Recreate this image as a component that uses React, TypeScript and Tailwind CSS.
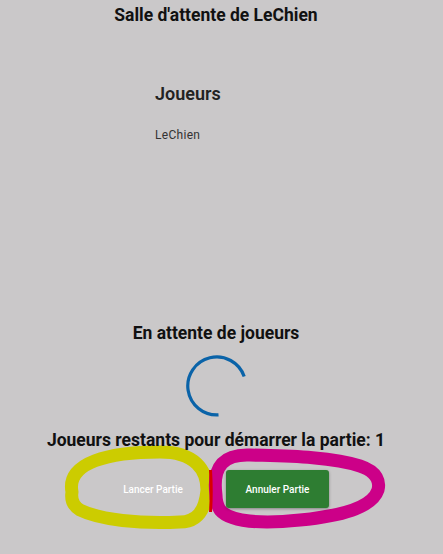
import React from 'react';

const Spinner = () => (
  <svg width="64" height="64" viewBox="0 0 64 64" className="block">
    {/* arc from right-up around the left to the bottom */}
    <path
      d="M 60.2 22.5 A 29 29 0 1 0 34.5 60.9"
      fill="none"
      stroke="#0a63a8"
      strokeWidth="3.2"
    />
  </svg>
);

// hand-drawn marks over the buttons
const Marks = () => (
  <svg
    width="443"
    height="554"
    viewBox="0 0 443 554"
    className="absolute left-0 top-0 pointer-events-none"
  >
    <path
      d="M 72 492 C 66 462 110 452 160 452 C 195 452 207 470 207 490 C 205 512 196 522 180 522 C 140 524 100 520 80 510 C 72 505 71 498 72 492 Z"
      fill="none"
      stroke="#cccc00"
      strokeWidth="13"
      strokeLinejoin="round"
    />
    <path
      d="M 216 495 C 212 465 225 454 250 455 C 280 456 330 456 360 466 C 378 472 380 482 378 490 C 372 508 340 516 300 520 C 262 524 230 522 220 510 C 217 505 216 500 216 495 Z"
      fill="none"
      stroke="#cc0088"
      strokeWidth="13"
      strokeLinejoin="round"
    />
    <path d="M 210.5 470 C 211.5 485 211.5 498 210.5 512" fill="none" stroke="#d80000" strokeWidth="3" />
  </svg>
);

export default function App() {
  return (
    <div
      className="relative w-[443px] h-[554px] overflow-hidden bg-[#cac8c9]"
      style={{ fontFamily: 'Roboto, "Noto Sans", sans-serif' }}
    >
      <Marks />
      <div className="relative w-[432px] flex flex-col items-center">
        <h1 className="mt-[4px] text-[17.5px] leading-[22px] font-bold text-[#111]">
          Salle d'attente de LeChien
        </h1>

        {/* Liste des joueurs */}
        <div className="mt-[57px] w-[122px]">
          <h2 className="text-[18px] leading-[22px] font-semibold text-[#222]">Joueurs</h2>
          <p className="mt-[22px] text-[12px] leading-[16px] tracking-[0.3px] text-[#333]">LeChien</p>
        </div>

        <h3 className="mt-[179px] text-[17.5px] leading-[22px] font-bold text-[#111]">
          En attente de joueurs
        </h3>

        <div className="mt-[10px]">
          <Spinner />
        </div>

        <p className="mt-[11px] text-[17.5px] leading-[22px] font-bold text-[#111]">
          Joueurs restants pour démarrer la partie: 1
        </p>

        <div className="mt-[19px] mr-[7px] flex items-center gap-[16px]">
          <button className="w-[114px] h-[38px] rounded-[3px] text-[10px] font-medium text-white">
            Lancer Partie
          </button>
          <button className="w-[103px] h-[38px] rounded-[3px] bg-[#2e7d32] text-[10px] font-medium text-white shadow-[0_1px_3px_rgba(0,0,0,0.35)]">
            Annuler Partie
          </button>
        </div>
      </div>
    </div>
  );
}
